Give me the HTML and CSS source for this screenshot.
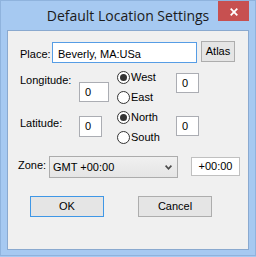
FILE: index.html
```html
<!DOCTYPE html>
<html>
<head>
<meta charset="utf-8">
<link rel="stylesheet" href="styles.css">
</head>
<body>
<div class="window">
  <div class="titlebar">
    <span class="title">Default Location Settings</span>
    <div class="close"><svg width="8" height="8" viewBox="0 0 8 8"><path d="M0.7 0.7 L7.3 7.3 M7.3 0.7 L0.7 7.3" stroke="#fff" stroke-width="1.8" fill="none"/></svg></div>
  </div>
  <div class="client">
    <div class="place-row">
      <span class="lbl place-lbl">Place:</span>
      <div class="edit place-edit">Beverly, MA:USa</div>
      <div class="btn atlas">Atlas</div>
    </div>
    <div class="coords">
      <span class="lbl lon-lbl">Longitude:</span>
      <div class="edit lon-edit">0</div>
      <div class="radio r1"><span class="dot on"></span><span class="lbl">West</span></div>
      <div class="radio r2"><span class="dot"></span><span class="lbl">East</span></div>
      <div class="radio r3"><span class="dot on"></span><span class="lbl">North</span></div>
      <div class="radio r4"><span class="dot"></span><span class="lbl">South</span></div>
      <div class="edit ew-edit">0</div>
      <span class="lbl lat-lbl">Latitude:</span>
      <div class="edit lat-edit">0</div>
      <div class="edit ns-edit">0</div>
    </div>
    <div class="zone-row">
      <span class="lbl zone-lbl">Zone:</span>
      <div class="combo"><span>GMT +00:00</span><svg width="7" height="5" viewBox="0 0 7 5"><path d="M0.6 0.6 L3.5 3.8 L6.4 0.6" stroke="#4a4a4a" stroke-width="1.6" fill="none"/></svg></div>
      <div class="offset">+00:00</div>
    </div>
    <div class="btn-row">
      <div class="btn default">OK</div>
      <div class="btn">Cancel</div>
    </div>
  </div>
</div>
</body>
</html>
```

FILE: styles.css
```css
* { box-sizing: border-box; }
html, body { margin: 0; padding: 0; }
body {
  width: 256px;
  height: 257px;
  background: #a6c9f1;
  font-family: "Liberation Sans", Arial, sans-serif;
  font-size: 11px;
  color: #000;
}
.window {
  width: 256px;
  height: 256px;
  background: #a6c9f1;
  border: 1px solid #8fb3dd;
  display: flex;
  flex-direction: column;
}
.titlebar {
  position: relative;
  height: 29px;
  flex: none;
  display: flex;
  justify-content: center;
  align-items: center;
  padding-bottom: 1px;
}
.title {
  font-family: "Open Sans", sans-serif;
  font-size: 14px;
  color: #1b1b1b;
}
.close {
  position: absolute;
  top: 0;
  right: 6px;
  width: 31px;
  height: 20px;
  background: #c75050;
  display: flex;
  align-items: center;
  justify-content: center;
  padding-top: 2px;
}
.close svg { display: block; }
.client {
  margin: 0 6px;
  height: 220px;
  flex: none;
  border: 1px solid #8aa9cf;
  background: #f0f0f0;
  padding: 10px 0 0 12px;
  display: flex;
  flex-direction: column;
}
.lbl {
  line-height: 13px;
  white-space: nowrap;
}
.edit {
  background: #fff;
  border: 1px solid #abadb3;
  line-height: 13px;
  padding: 3px 0 0 5px;
  white-space: nowrap;
}
.btn {
  height: 21px;
  border: 1px solid #adadad;
  background: #e5e5e5;
  display: flex;
  align-items: center;
  justify-content: center;
  line-height: 13px;
}
.btn.default { border-color: #3f97e6; }

.place-row {
  display: flex;
  align-items: flex-start;
  height: 22px;
}
.place-lbl { width: 32px; margin-top: 7px; }
.place-edit {
  width: 145px;
  height: 21px;
  margin-top: 1px;
  border-color: #569de5;
  padding: 5px 0 0 5px;
}
.atlas { margin-left: 4px; width: 34px; }

.coords {
  display: grid;
  grid-template-columns: 59px 38px 59px 23px;
  grid-template-rows: repeat(4, 20px);
  margin-top: 4px;
}
.coords > * { align-self: start; justify-self: start; }
.lon-lbl { grid-column: 1; grid-row: 1 / 3; margin-top: 7px; }
.lon-edit { grid-column: 2; grid-row: 1 / 3; margin-top: 15px; width: 30px; height: 20px; }
.lat-lbl { grid-column: 1; grid-row: 3 / 5; margin-top: 10px; }
.lat-edit { grid-column: 2; grid-row: 3 / 5; margin-top: 9px; width: 23px; height: 21px; }
.ew-edit { grid-column: 4; grid-row: 1 / 3; margin-top: 6px; width: 23px; height: 20px; }
.ns-edit { grid-column: 4; grid-row: 3 / 5; margin-top: 9px; width: 23px; height: 20px; }

.radio {
  grid-column: 3;
  align-self: center;
  display: flex;
  align-items: center;
  gap: 1px;
}
.r1 { grid-row: 1; }
.r2 { grid-row: 2; }
.r3 { grid-row: 3; }
.r4 { grid-row: 4; }
.dot {
  width: 13px;
  height: 13px;
  border-radius: 50%;
  border: 1px solid #333;
  background: #fff;
  position: relative;
  flex: none;
}
.dot.on::after {
  content: "";
  position: absolute;
  inset: 2px;
  border-radius: 50%;
  background: #333;
}

.zone-row {
  display: flex;
  align-items: flex-start;
  margin-top: 9px;
  margin-left: -2px;
}
.zone-lbl { width: 31px; margin-top: 3px; }
.combo {
  width: 129px;
  height: 22px;
  border: 1px solid #acacac;
  background: linear-gradient(#f0f0f0, #e5e5e5);
  display: flex;
  align-items: center;
  justify-content: space-between;
  padding: 1px 5px 0 3px;
  line-height: 13px;
}
.combo svg { display: block; }
.offset {
  margin-left: 13px;
  margin-top: 1px;
  width: 49px;
  height: 19px;
  border: 1px solid #c0c0c0;
  background: #fff;
  text-align: center;
  line-height: 17px;
}

.btn-row {
  display: flex;
  margin-top: 18px;
  margin-left: 10px;
  gap: 34px;
}
.btn-row .btn { width: 74px; }
```
